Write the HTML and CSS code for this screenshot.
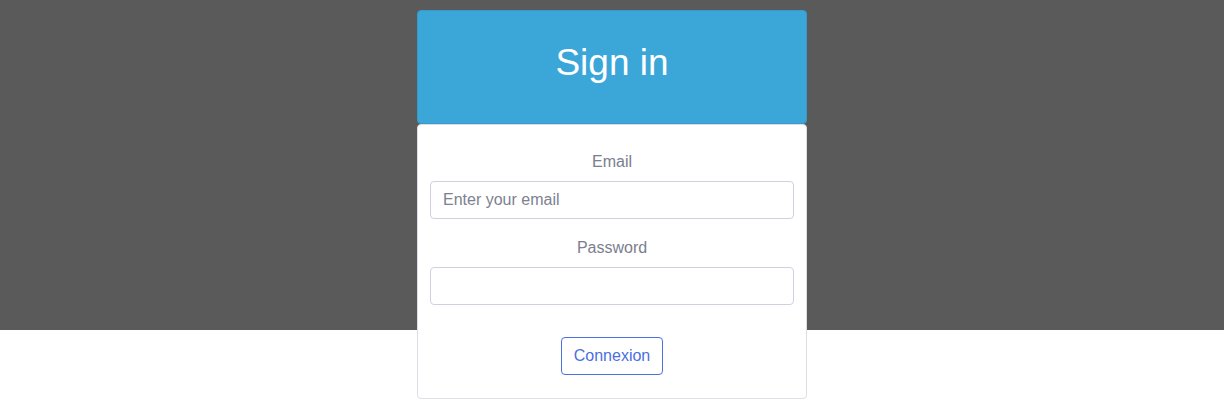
FILE: index.html
```html
<!DOCTYPE html>
<html lang="en">
<head>
<meta charset="utf-8">
<title>Sign in</title>
<link rel="stylesheet" href="styles.css">
</head>
<body>
<main class="page">
  <div class="login">
    <div class="login-header">
      <h1 class="login-title">Sign in</h1>
    </div>
    <form class="login-body">
      <label class="field-label" for="email">Email</label>
      <input class="field-input" id="email" type="email" placeholder="Enter your email">
      <label class="field-label field-label--spaced" for="password">Password</label>
      <input class="field-input" id="password" type="password">
      <div class="actions">
        <button class="btn-outline" type="button">Connexion</button>
      </div>
    </form>
  </div>
</main>
</body>
</html>
```

FILE: styles.css
```css
* { box-sizing: border-box; }

html, body {
  margin: 0;
  padding: 0;
  font-family: "Liberation Sans", Arial, sans-serif;
}

html {
  background: #ffffff;
}

body {
  min-height: 400px;
  background: linear-gradient(to bottom, #5a5a5a 0, #5a5a5a 330px, #ffffff 330px, #ffffff 100%);
  background-repeat: no-repeat;
}

.page {
  padding-top: 10px;
  padding-bottom: 1px;
}

.login {
  width: 390px;
  margin: 0 auto;
}

.login-header {
  height: 114px;
  background: #3ba6d8;
  border: 1px solid #3699c8;
  border-radius: 4px;
  display: flex;
  align-items: center;
  justify-content: center;
}

.login-title {
  margin: 0;
  color: #ffffff;
  font-weight: 400;
  font-size: 37px;
  line-height: 44px;
  padding-bottom: 9px;
}

.login-body {
  background: #ffffff;
  border: 1px solid #dedee6;
  border-radius: 4px;
  padding: 25px 12px 23px;
  display: flex;
  flex-direction: column;
}

.field-label {
  display: block;
  text-align: center;
  color: #7a7e8e;
  font-size: 16px;
  line-height: 24px;
  margin-bottom: 7px;
}

.field-label--spaced {
  margin-top: 17px;
}

.field-input {
  display: block;
  width: 100%;
  height: 38px;
  border: 1px solid #cfd0e0;
  border-radius: 4px;
  padding: 0 12px;
  font-family: "Liberation Sans", Arial, sans-serif;
  font-size: 16px;
  color: #555a6a;
  background: #ffffff;
  outline: none;
}

.field-input::placeholder {
  color: #7d8190;
}

.actions {
  display: flex;
  justify-content: center;
  margin-top: 32px;
}

.btn-outline {
  height: 38px;
  padding: 0 12px;
  background: #ffffff;
  border: 1px solid #4b6fe0;
  border-radius: 4px;
  color: #4b6fe0;
  font-family: "Liberation Sans", Arial, sans-serif;
  font-size: 16px;
  cursor: pointer;
}
```
